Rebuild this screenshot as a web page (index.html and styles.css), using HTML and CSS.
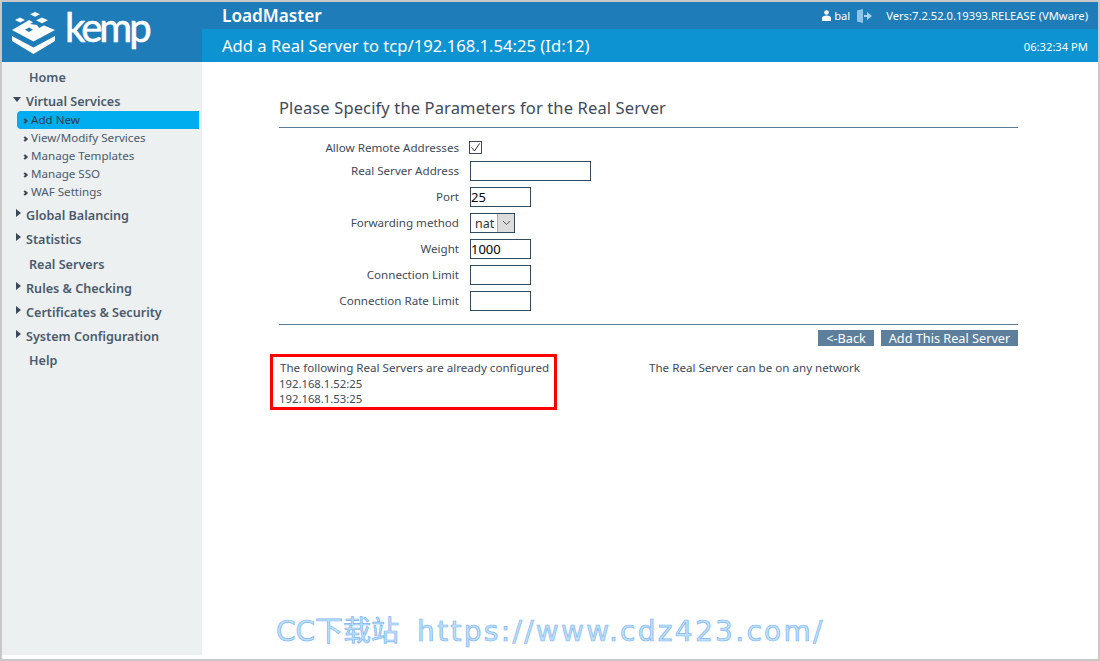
FILE: index.html
```html
<!DOCTYPE html>
<html lang="en">
<head>
<meta charset="utf-8">
<title>LoadMaster</title>
<link rel="stylesheet" href="styles.css">
</head>
<body>
<div class="frame">
  <header class="header">
    <div class="logo">
      <svg class="logo-mark" width="43" height="42" viewBox="0 0 43 42">
        <g fill="#fff">
          <path d="M23 0l5 2.300-5 2.500-5-2.500z"/>
          <path d="M30 5.500l6 2.800-6 3-6-3z"/>
          <path d="M8 5.500l5 2.500-5 2.500-5-2.500z"/>
          <path fill-rule="evenodd" d="M0 18L13 10.500 17 8l4 2.300-3 1.700 7 1 2 3 5-2.500L43 18 21.500 29.500zM17 15.500l-4 2.300 4 2.300 4-2.300z"/>
          <path d="M0 24l21.500 11.500L43 24v5L21.500 42 0 29z"/>
        </g>
      </svg>
      <span class="logo-word">kemp</span>
    </div>
    <div class="head-main">
      <div class="topbar">
        <span class="product">LoadMaster</span>
        <div class="session">
          <svg class="user-icon" width="9" height="11" viewBox="0 0 9 11"><circle cx="4.500" cy="2.500" r="2.300" fill="#fff"/><path d="M0 11V8C0 6.500 2 5.500 4.500 5.500S9 6.500 9 8v3z" fill="#fff"/></svg>
          <span class="user">bal</span>
          <svg class="logout-icon" width="15" height="14" viewBox="0 0 15 14"><path d="M0 1.500L6 0v14l-6-1.500z" fill="#8fc4ea"/><path d="M7 6h3V3l5 4-5 4V8H7z" fill="#a9d3f0"/></svg>
          <span class="version">Vers:7.2.52.0.19393.RELEASE (VMware)</span>
        </div>
      </div>
      <div class="subbar">
        <span class="page-title">Add a Real Server to tcp/192.168.1.54:25 (Id:12)</span>
        <span class="clock">06:32:34 PM</span>
      </div>
    </div>
  </header>
  <div class="body">
    <nav class="sidebar">
      <div class="nav-top plain">Home</div>
      <div class="nav-top"><span class="tri down"></span>Virtual Services</div>
      <ul class="subnav">
        <li class="active"><span class="chev"></span>Add New</li>
        <li><span class="chev"></span>View/Modify Services</li>
        <li><span class="chev"></span>Manage Templates</li>
        <li><span class="chev"></span>Manage SSO</li>
        <li><span class="chev"></span>WAF Settings</li>
      </ul>
      <div class="nav-top"><span class="tri right"></span>Global Balancing</div>
      <div class="nav-top tall"><span class="tri right"></span>Statistics</div>
      <div class="nav-top plain">Real Servers</div>
      <div class="nav-top"><span class="tri right"></span>Rules &amp; Checking</div>
      <div class="nav-top"><span class="tri right"></span>Certificates &amp; Security</div>
      <div class="nav-top"><span class="tri right"></span>System Configuration</div>
      <div class="nav-top plain">Help</div>
    </nav>
    <main class="content">
      <h1 class="heading">Please Specify the Parameters for the Real Server</h1>
      <form class="form">
        <label class="lbl check-lbl">Allow Remote Addresses</label>
        <div class="check-row"><span class="check"><svg width="13" height="13" viewBox="0 0 13 13"><path d="M2.500 6.500l3 3.500 5-7.500" fill="none" stroke="#333" stroke-width="1"/></svg></span></div>
        <label class="lbl">Real Server Address</label>
        <div class="cell"><input class="field wide" type="text"></div>
        <label class="lbl">Port</label>
        <div class="cell"><input class="field" type="text" value="25"></div>
        <label class="lbl">Forwarding method</label>
        <div class="cell"><span class="select"><span class="select-val">nat</span><span class="select-btn"><svg width="9" height="6" viewBox="0 0 9 6"><path d="M1 1l3.500 3.500L8 1" fill="none" stroke="#555"/></svg></span></span></div>
        <label class="lbl">Weight</label>
        <div class="cell"><input class="field" type="text" value="1000"></div>
        <label class="lbl">Connection Limit</label>
        <div class="cell"><input class="field" type="text"></div>
        <label class="lbl">Connection Rate Limit</label>
        <div class="cell"><input class="field" type="text"></div>
      </form>
      <div class="actions">
        <button class="btn back" type="button">&lt;-Back</button>
        <button class="btn add" type="button">Add This Real Server</button>
      </div>
      <div class="notes">
        <div class="configured">
          <div class="cfg-title">The following Real Servers are already configured</div>
          <div class="cfg-line">192.168.1.52:25</div>
          <div class="cfg-line">192.168.1.53:25</div>
        </div>
        <div class="note">The Real Server can be on any network</div>
      </div>
    </main>
  </div>
  <div class="watermark">CC下载站<span class="wm-url">https://www.cdz423.com/</span></div>
</div>
</body>
</html>
```
FILE: styles.css
```css
* { box-sizing: border-box; }
html, body { margin: 0; height: 100%; }
body {
  width: 1100px;
  height: 661px;
  overflow: hidden;
  background: #fff;
  font-family: "Noto Sans", sans-serif;
}
.frame {
  position: relative;
  width: 1100px;
  height: 661px;
  border: 2px solid #c8c8c8;
  display: flex;
  flex-direction: column;
}
.header { display: flex; height: 60px; background: #1e7cb8; color: #fff; flex: none; }
.logo { width: 200px; display: flex; align-items: flex-start; padding: 10px 0 0 10px; gap: 10px; }
.logo-mark { flex: none; }
.logo-word { font: 40px/40px Lato, sans-serif; letter-spacing: -3px; -webkit-text-stroke: 0.6px #fff; margin-top: -5px; }
.head-main { flex: 1; display: flex; flex-direction: column; }
.topbar { height: 27px; display: flex; justify-content: space-between; align-items: center; padding: 0 10px 0 20px; }
.product { font-size: 17.200px; font-weight: 600; }
.session { display: flex; align-items: center; font-size: 11.200px; }
.user-icon { margin-right: 3px; }
.logout-icon { margin: 0 14px 0 7px; }
.subbar { flex: 1; background: #0d93d2; display: flex; justify-content: space-between; align-items: center; padding: 0 10px 0 20px; }
.page-title { font-size: 16.630px; }
.clock { font-size: 11.200px; margin-top: 2px; }
.body { flex: 1; display: flex; min-height: 0; }
.sidebar { width: 200px; height: 593px; background: #ecf0f1; color: #4b5a6c; padding-top: 6px; flex: none; }
.nav-top { font-size: 12.600px; font-weight: 600; height: 24px; line-height: 19px; padding-left: 24px; position: relative; }
.nav-top.tall { height: 25px; }
.nav-top.plain { padding-left: 27px; }
.tri { position: absolute; width: 0; height: 0; border-style: solid; }
.tri.down { left: 11px; top: 5px; border-width: 5px 4px 0; border-color: #3c4858 transparent transparent; }
.tri.right { left: 14px; top: 3px; border-width: 4px 0 4px 5px; border-color: transparent transparent transparent #3c4858; }
.subnav { list-style: none; margin: -5px 0 5px; padding: 0; }
.subnav li { height: 18px; line-height: 17px; font-size: 11.600px; margin-left: 15px; margin-right: 3px; padding-left: 6px; display: flex; }
.subnav li.active { background: #00aeef; border-radius: 4px 0 0 4px; color: #2f3b4a; }
.chev { width: 4px; height: 4px; border-top: 2px solid #3c4858; border-right: 2px solid #3c4858; transform: rotate(45deg); flex: none; margin: 8px 4px 0 0; }
.content { flex: 1; padding: 0 80px 0 77px; color: #3e4a5a; }
.heading { font-size: 16.500px; font-weight: 400; margin: 0; height: 66px; padding: 35px 0 0; line-height: 22px; border-bottom: 1px solid #5b7c99; letter-spacing: 0.13px; }
.form { display: grid; grid-template-columns: 180px 1fr; column-gap: 11px; grid-auto-rows: 26px; padding-top: 7px; height: 197px; border-bottom: 1px solid #5b7c99; font-size: 11.600px; }
.lbl { text-align: right; line-height: 20px; }
.check-lbl { line-height: 26px; }
.check-row { height: 26px; padding-top: 6px; margin-left: -1px; }
.check { display: block; width: 13px; height: 13px; border: 1px solid #3e4a5a; background: #fff; position: relative; }
.check svg { position: absolute; left: -1px; top: -1px; }
.cell { height: 20px; }
.field { display: block; width: 61px; height: 20px; border: 1px solid #34495e; background: #fff; font: 13px "Noto Sans", sans-serif; padding: 0; color: #000; outline: none; border-radius: 0; }
.field.wide { width: 121px; }
.select { display: inline-flex; height: 20px; width: 45px; border: 1px solid #34495e; font-size: 12.500px; color: #333; }
.select-val { flex: 1; padding-left: 4px; line-height: 20px; }
.select-btn { width: 17px; background: #dcdcdc; border-left: 1px solid #aaa; display: flex; align-items: center; justify-content: center; }
.actions { display: flex; justify-content: flex-end; gap: 7px; margin-top: 5px; }
.btn { height: 16px; border: 0; border-radius: 0; background: #5d7f9b; color: #fff; font: 12.700px/16px "Noto Sans", sans-serif; padding: 0; }
.btn.back { width: 56px; }
.btn.add { width: 137px; }
.notes { display: flex; margin-top: 8px; margin-left: -9px; align-items: flex-start; }
.configured { width: 287px; height: 56px; border: 3px solid #f00; padding: 3px 6px; font-size: 11.600px; margin-right: 92px; white-space: nowrap; }
.cfg-title { line-height: 16px; height: 16px; padding-left: 1px; }
.cfg-line { line-height: 15px; height: 15px; font-size: 11.300px; }
.note { font-size: 11.600px; line-height: 16px; padding-top: 6px; }
.watermark { position: absolute; left: 274px; top: 614px; font: 28px/32px "DejaVu Sans", "Noto Sans CJK SC", sans-serif; color: #bfe0fb; -webkit-text-stroke: 0.7px #7db6f0; white-space: nowrap; }
.wm-url { margin-left: 18px; letter-spacing: 2.300px; }
```
